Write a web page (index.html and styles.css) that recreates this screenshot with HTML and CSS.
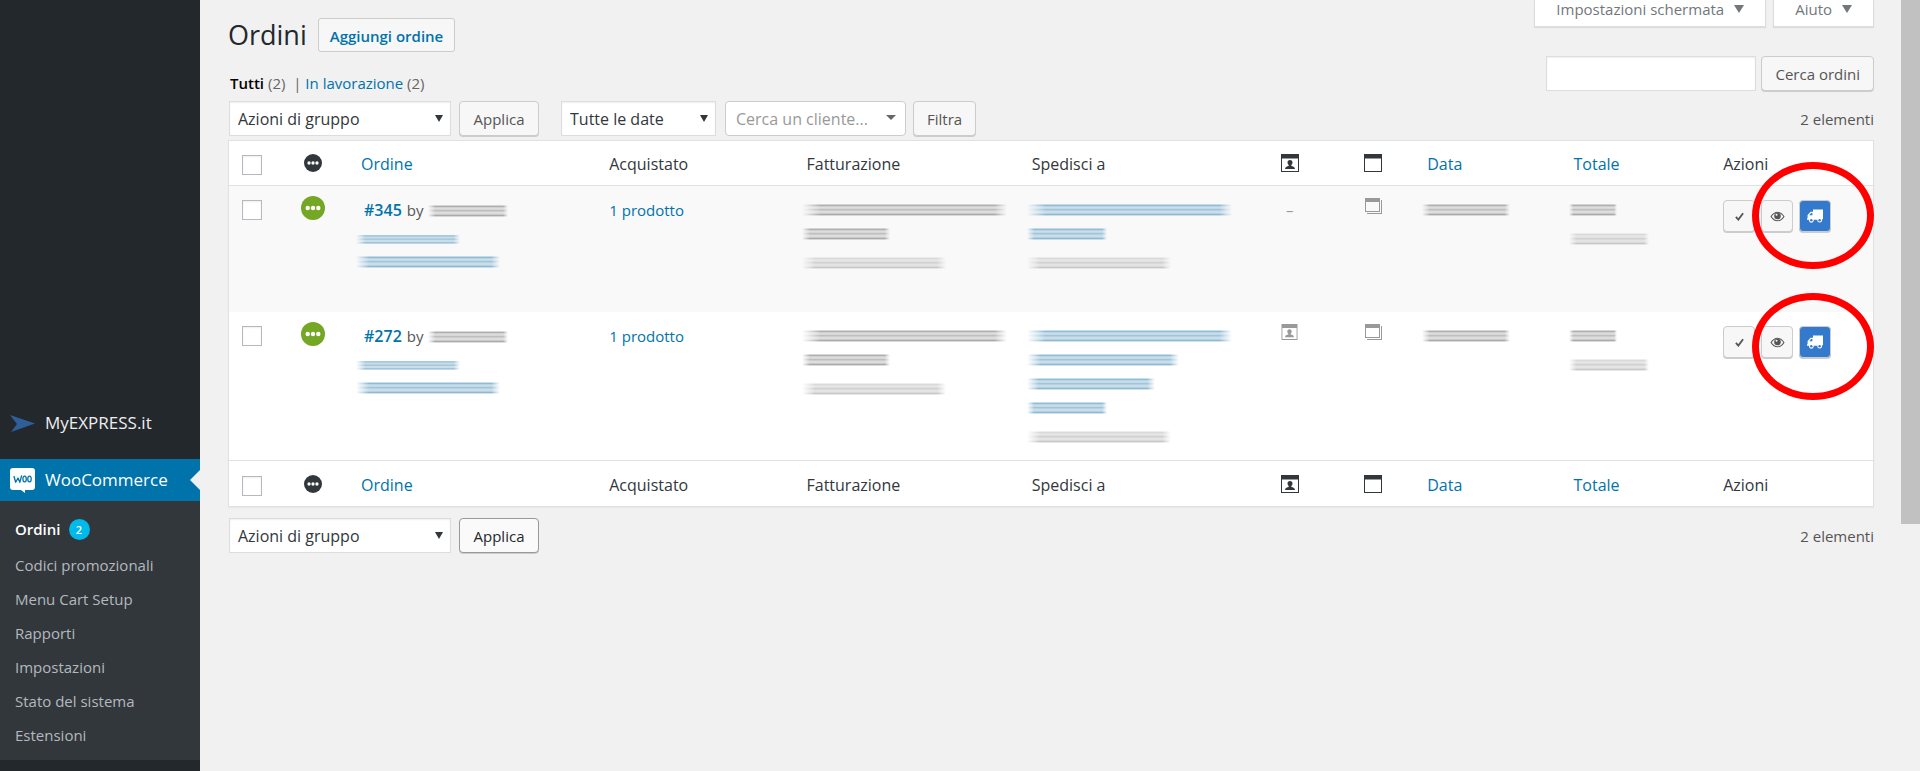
FILE: index.html
```html
<!DOCTYPE html>
<html lang="it">
<head>
<meta charset="utf-8">
<title>Ordini</title>
<link rel="stylesheet" href="styles.css">
</head>
<body>
<svg class="defs" aria-hidden="true">
  <symbol id="i-status" viewBox="0 0 24 24"><circle cx="12" cy="12" r="12" fill="currentColor"/><g fill="#fff"><circle cx="6.700" cy="12" r="2.200"/><circle cx="12" cy="12" r="2.200"/><circle cx="17.300" cy="12" r="2.200"/></g></symbol>
  <symbol id="i-customer" viewBox="0 0 18 18"><path fill="currentColor" fill-rule="evenodd" d="M0 0h18v18H0zM1 4.500V17h16V4.500z"/><path fill="currentColor" d="M9 6c1.600 0 2.500 1.100 2.500 2.500 0 1-.5 1.900-1.200 2.600v.8c1.800.3 3.700 1 3.700 3.100H4c0-2.100 1.900-2.800 3.700-3.100v-.8C7 10.400 6.500 9.500 6.500 8.500 6.500 7.100 7.400 6 9 6z"/></symbol>
  <symbol id="i-note" viewBox="0 0 18 18"><path fill="currentColor" fill-rule="evenodd" d="M0 0h18v18H0zM1 4.500V17h16V4.500z"/></symbol>
  <symbol id="i-notes" viewBox="0 0 17 16"><path fill="currentColor" fill-rule="evenodd" d="M0 0h15v14H0zM1 4v9h13V4z"/><path fill="currentColor" d="M16 2h1v14H2v-1h14z"/></symbol>
  <symbol id="i-check" viewBox="0 0 10 10"><path fill="none" stroke="currentColor" stroke-width="2" d="M1 5.500l2.700 3L9 1.300"/></symbol>
  <symbol id="i-eye" viewBox="0 0 16 12"><path fill="none" stroke="currentColor" stroke-width="1.200" d="M1 6c2-3.200 4.400-4.700 7-4.700S13 2.800 15 6c-2 3.200-4.400 4.700-7 4.700S3 9.200 1 6z"/><circle cx="8" cy="5.500" r="3.600" fill="currentColor"/><circle cx="7" cy="4.200" r="1.100" fill="#f7f7f7"/></symbol>
  <symbol id="i-truck" viewBox="0 0 16 14"><path fill="#fff" d="M6 .5h10v9.800h-1.100a2.400 2.400 0 1 1-4.600.5H6.700a2.400 2.400 0 1 1-4.700 0H0V9.300h.6V6l3-3.200H6z"/><path fill="#337acc" d="M2.200 6.300l1.900-2.200h1.300v2.200z"/><g fill="#337acc"><circle cx="4.300" cy="11.300" r="1.200"/><circle cx="12.600" cy="11.300" r="1.200"/></g></symbol>
</svg>
<div class="app">
  <aside class="sidebar">
    <nav class="menu">
      <a class="menu-item" href="#">
        <svg class="menu-icon" viewBox="0 0 25 25"><path fill="#2f5f9b" d="M0 4l25 8.500L1 21l6-8z"/></svg>MyEXPRESS.it</a>
      <a class="menu-item current" href="#">
        <svg class="menu-icon" viewBox="0 0 25 25"><path fill="#fff" d="M3 0h19a3 3 0 0 1 3 3v16a3 3 0 0 1-3 3h-7v3l-4-3H3a3 3 0 0 1-3-3V3a3 3 0 0 1 3-3z"/><g fill="none" stroke="#0073aa" stroke-width="1.300" stroke-linecap="round" stroke-linejoin="round"><path d="M4 8.500l1.700 5.800L8 10l1.800 4.300L11.500 8"/><ellipse cx="14.600" cy="11" rx="1.700" ry="2.900"/><ellipse cx="19.500" cy="11" rx="1.700" ry="2.900"/></g></svg>WooCommerce</a>
      <ul class="submenu">
        <li class="first"><a class="active" href="#">Ordini</a><span class="count">2</span></li>
        <li><a href="#">Codici promozionali</a></li>
        <li><a href="#">Menu Cart Setup</a></li>
        <li><a href="#">Rapporti</a></li>
        <li><a href="#">Impostazioni</a></li>
        <li><a href="#">Stato del sistema</a></li>
        <li><a href="#">Estensioni</a></li>
      </ul>
    </nav>
  </aside>
  <main class="content">
    <div class="head">
      <div class="title"><h1>Ordini</h1><a class="add" href="#">Aggiungi ordine</a></div>
      <div class="meta"><button class="tab">Impostazioni schermata<i class="tri"></i></button><button class="tab">Aiuto<i class="tri"></i></button></div>
    </div>
    <div class="subhead">
      <div class="views"><a class="all" href="#">Tutti</a> (2)&nbsp; <span class="bar">|</span>&nbsp;<a href="#">In lavorazione</a> (2)</div>
      <form class="search"><input type="search" aria-label="Cerca ordini"><button class="btn" type="button">Cerca ordini</button></form>
    </div>
    <div class="filters">
      <span class="pick bulk"><select aria-label="Azioni di gruppo"><option>Azioni di gruppo</option></select></span>
      <button class="btn apply">Applica</button>
      <span class="pick date"><select aria-label="Data"><option>Tutte le date</option></select></span>
      <span class="pick client"><select aria-label="Cliente"><option>Cerca un cliente...</option></select></span>
      <button class="btn">Filtra</button>
      <span class="total">2 elementi</span>
    </div>
    <table class="orders">
      <colgroup><col class="c-cb"><col class="c-status"><col class="c-order"><col class="c-items"><col class="c-bill"><col class="c-ship"><col class="c-msg"><col class="c-note"><col class="c-date"><col class="c-total"><col class="c-act"></colgroup>
      <thead>
        <tr><th><input type="checkbox" aria-label="Seleziona tutto"></th><th class="mid"><svg class="dot"><use href="#i-status"/></svg></th><th><a href="#">Ordine</a></th><th>Acquistato</th><th>Fatturazione</th><th>Spedisci a</th><th class="mid"><svg class="ico"><use href="#i-customer"/></svg></th><th class="mid"><svg class="ico"><use href="#i-note"/></svg></th><th><a href="#">Data</a></th><th><a href="#">Totale</a></th><th>Azioni</th></tr>
      </thead>
      <tbody>
        <tr class="odd">
          <td><input type="checkbox" aria-label="Seleziona 345"></td>
          <td class="mid"><svg class="state"><use href="#i-status"/></svg></td>
          <td><div class="who"><a href="#">#345</a> by <i class="smudge w80"></i></div><i class="smudge blue thin w104"></i><i class="smudge blue w144"></i></td>
          <td class="txt"><a href="#">1 prodotto</a></td>
          <td><i class="smudge w200"></i><i class="smudge w88"></i><i class="smudge light w144"></i></td>
          <td><i class="smudge blue w200"></i><i class="smudge blue w80"></i><i class="smudge light w144"></i></td>
          <td class="mid dash">–</td>
          <td class="mid"><svg class="small"><use href="#i-notes"/></svg></td>
          <td><i class="smudge w88"></i></td>
          <td><i class="smudge w48"></i><i class="smudge light w80"></i></td>
          <td class="act"><div class="actions"><button class="btn sq" aria-label="Completato"><svg class="check"><use href="#i-check"/></svg></button><button class="btn sq" aria-label="Vedi"><svg class="eye"><use href="#i-eye"/></svg></button><button class="btn sq ship" aria-label="Spedisci"><svg class="truck"><use href="#i-truck"/></svg></button></div><span class="ring"></span></td>
        </tr>
        <tr class="even">
          <td><input type="checkbox" aria-label="Seleziona 272"></td>
          <td class="mid"><svg class="state"><use href="#i-status"/></svg></td>
          <td><div class="who"><a href="#">#272</a> by <i class="smudge w80"></i></div><i class="smudge blue thin w104"></i><i class="smudge blue w144"></i></td>
          <td class="txt"><a href="#">1 prodotto</a></td>
          <td><i class="smudge w200"></i><i class="smudge w88"></i><i class="smudge light w144"></i></td>
          <td><i class="smudge blue w200"></i><i class="smudge blue w152"></i><i class="smudge blue w128"></i><i class="smudge blue w80"></i><i class="smudge light w144"></i></td>
          <td class="mid"><svg class="small"><use href="#i-customer"/></svg></td>
          <td class="mid"><svg class="small"><use href="#i-notes"/></svg></td>
          <td><i class="smudge w88"></i></td>
          <td><i class="smudge w48"></i><i class="smudge light w80"></i></td>
          <td class="act"><div class="actions"><button class="btn sq" aria-label="Completato"><svg class="check"><use href="#i-check"/></svg></button><button class="btn sq" aria-label="Vedi"><svg class="eye"><use href="#i-eye"/></svg></button><button class="btn sq ship" aria-label="Spedisci"><svg class="truck"><use href="#i-truck"/></svg></button></div><span class="ring low"></span></td>
        </tr>
      </tbody>
      <tfoot>
        <tr><th><input type="checkbox" aria-label="Seleziona tutto"></th><th class="mid"><svg class="dot"><use href="#i-status"/></svg></th><th><a href="#">Ordine</a></th><th>Acquistato</th><th>Fatturazione</th><th>Spedisci a</th><th class="mid"><svg class="ico"><use href="#i-customer"/></svg></th><th class="mid"><svg class="ico"><use href="#i-note"/></svg></th><th><a href="#">Data</a></th><th><a href="#">Totale</a></th><th>Azioni</th></tr>
      </tfoot>
    </table>
    <div class="filters bottom">
      <span class="pick bulk"><select aria-label="Azioni di gruppo"><option>Azioni di gruppo</option></select></span>
      <button class="btn apply hover">Applica</button>
      <span class="total">2 elementi</span>
    </div>
  </main>
  <div class="track"><div class="thumb"></div></div>
</div>
</body>
</html>
```
FILE: styles.css
```css
* { box-sizing: border-box; }
body { margin: 0; background: #f1f1f1; color: #555; font: 15px/20px "Open Sans", "Noto Sans", sans-serif; }
a { color: #0073aa; text-decoration: none; }
button, input, select { font: inherit; color: inherit; margin: 0; }
svg { display: block; overflow: visible; }
.defs { position: absolute; width: 0; height: 0; }
.app { display: flex; min-height: 100vh; }

.sidebar { width: 200px; flex: none; background: #23282d; padding-top: 402px; }
.menu-item { display: flex; align-items: center; gap: 10px; height: 42px; padding: 0 10px; margin-bottom: 15px; color: #eee; font-size: 17px; }
.menu-icon { width: 25px; height: 25px; flex: none; }
.menu-item.current { position: relative; margin-bottom: 0; background: #0073aa; color: #fff; }
.menu-item.current::after { content: ""; position: absolute; right: 0; top: 11px; border: 10px solid transparent; border-left: 0; border-right-color: #f1f1f1; }
.submenu { margin: 0; padding: 9px 0 8px; list-style: none; background: #32373c; }
.submenu li { display: flex; align-items: center; gap: 8px; height: 34px; padding: 0 15px; }
.submenu .first { height: 38px; }
.submenu a { color: #b4b9be; }
.submenu .active { color: #fff; font-weight: 600; }
.count { width: 21px; height: 21px; border-radius: 50%; background: #00b9eb; color: #fff; font-size: 11px; line-height: 21px; font-weight: 600; text-align: center; }

.content { flex: 1; min-width: 0; padding: 0 27px 0 28px; }
.track { width: 19px; flex: none; }
.thumb { height: 68vh; background: #c1c1c1; }

.head { display: flex; justify-content: space-between; align-items: flex-start; }
.title { display: flex; align-items: center; gap: 11px; padding-top: 17px; }
h1 { margin: 0; font-size: 27px; line-height: 35px; font-weight: 400; color: #23282d; }
.add { height: 34px; padding: 0 11px; border: 1px solid #ccc; border-radius: 3px; background: #f7f7f7; font-weight: 600; font-size: 15px; line-height: 34px; }
.meta { display: flex; gap: 7px; }
.tab { display: flex; align-items: center; gap: 10px; height: 27px; padding: 0 21px 8px; border: 1px solid #ddd; border-top: 0; background: #fff; color: #72777c; box-shadow: 0 1px 1px #ddd; }
.tri { border: 5px solid transparent; border-top: 8px solid #72777c; border-bottom: 0; }

.subhead { display: flex; justify-content: space-between; align-items: flex-end; padding-top: 4px; }
.views { padding: 0 2px; color: #666; line-height: 16px; }
.views .all { color: #000; font-weight: 600; }
.search { display: flex; gap: 5px; }
.search input { width: 210px; height: 35px; border: 1px solid #ddd; background: #fff; box-shadow: inset 0 1px 2px #eee; }
.btn { height: 35px; padding: 0 13px; border: 1px solid #ccc; border-radius: 4px; background: #f7f7f7; box-shadow: 0 1px 0 #ccc; white-space: nowrap; }
.btn.hover { border-color: #999; background: #fafafa; color: #23282d; }

.filters { display: flex; align-items: center; padding: 10px 0 4px; }
.filters.bottom { padding-top: 11px; }
.pick { position: relative; margin: 0 8px 0 1px; }
.pick select { appearance: none; width: 100%; height: 35px; padding: 1px 8px 0; border: 1px solid #ddd; border-radius: 0; background: #fff; color: #32373c; font-size: 16px; box-shadow: inset 0 1px 2px #eee; }
.pick::after { content: ""; position: absolute; right: 8px; top: 14px; border: 4px solid transparent; border-top: 7px solid #32373c; border-bottom: 0; }
.bulk { width: 222px; }
.apply { width: 80px; }
.date { width: 155px; margin-left: 22px; }
.client { width: 181px; margin-right: 7px; }
.pick.client select { padding: 0 10px; border-color: #ccc; border-radius: 4px; color: #999; box-shadow: none; }
.client::after { right: 10px; border: 5px solid transparent; border-top: 5px solid #666; border-bottom: 0; }
.total { margin-left: auto; }

.orders { width: 100%; table-layout: fixed; border-collapse: separate; border-spacing: 0; border: 1px solid #e1e1e1; background: #fff; box-shadow: 0 1px 1px #e8e8e8; }
.c-cb { width: 48px; }
.c-status { width: 71px; }
.c-order { width: 15.1%; }
.c-items { width: 12%; }
.c-bill { width: 13.7%; }
.c-ship { width: 13.9%; }
.c-msg { width: 85px; }
.c-note { width: 82px; }
.c-date { width: 8.9%; }
.c-total { width: 9.1%; }
th { height: 45px; padding: 2px 13px 0; font-size: 16px; font-weight: 400; text-align: left; color: #32373c; }
th:first-child { padding-top: 4px; }
thead th { border-bottom: 1px solid #e1e1e1; }
tfoot th { height: 46px; border-top: 1px solid #e1e1e1; }
td { padding: 14px 13px 0; vertical-align: top; }
.odd td { height: 126px; background: #f9f9f9; }
.even td { height: 148px; }
th.mid, td.mid { padding-left: 0; padding-right: 0; text-align: center; }
th.mid { padding-top: 0; }
.mid svg { margin: 0 auto; }
input[type="checkbox"] { appearance: none; display: block; width: 20px; height: 20px; border: 1px solid #b4b9be; background: #fff; box-shadow: inset 0 1px 2px #eee; }
.dot { width: 18px; height: 18px; color: #32373c; }
.state { width: 24px; height: 24px; color: #73a724; }
td:has(.state) { padding-top: 10px; }
.ico { width: 18px; height: 18px; color: #32373c; }
.small { width: 17px; height: 16px; color: #999; }
td:has(.small) { padding-top: 12px; }
.dash { color: #999; }
.who { display: flex; align-items: center; gap: 5px; height: 20px; padding-left: 3px; margin-bottom: 14px; }
.who a { font-size: 16px; font-weight: 600; }

.smudge { display: block; height: 13px; margin: 3px 0 11px -5px; background: linear-gradient(transparent 0 6%, #aaa 18%, #ddd 30% 40%, #b8b8b8 52%, #ddd 62% 76%, #a4a4a4 90%, transparent); -webkit-mask: linear-gradient(90deg, transparent, #000 9% 94%, transparent); mask: linear-gradient(90deg, transparent, #000 9% 94%, transparent); }
.smudge.light { margin-top: 16px; background: linear-gradient(transparent 0 6%, #d8d8d8 18%, #e6e6e6 30% 40%, #ccc 52%, #e4e4e4 62% 76%, #c4c4c4 90%, transparent); }
.smudge.blue { background: linear-gradient(transparent 0 6%, #88b8d4 18%, #cadeea 30% 40%, #98c0d8 52%, #cadeea 62% 76%, #88b4d0 90%, transparent); }
.smudge.thin { height: 10px; }
.who .smudge { margin: 0; }
.w48 { width: 48px; }
.w80 { width: 80px; }
.w88 { width: 88px; }
.w104 { width: 104px; }
.w128 { width: 128px; }
.w144 { width: 144px; }
.w152 { width: 152px; }
.w200 { width: 205px; }

.act { position: relative; }
.actions { display: flex; gap: 6px; }
.sq { display: flex; align-items: center; justify-content: center; width: 32px; height: 32px; padding: 0; }
.ship { border-color: #ccc; background: #337acc; }
.check { width: 9px; height: 9px; }
.eye { width: 15px; height: 11px; }
.truck { width: 16px; height: 14px; }
.ring { position: absolute; left: 42px; top: -24px; width: 122px; height: 107px; border: 7px solid #f00; border-radius: 50%; }
.ring.low { top: -19px; }
```
